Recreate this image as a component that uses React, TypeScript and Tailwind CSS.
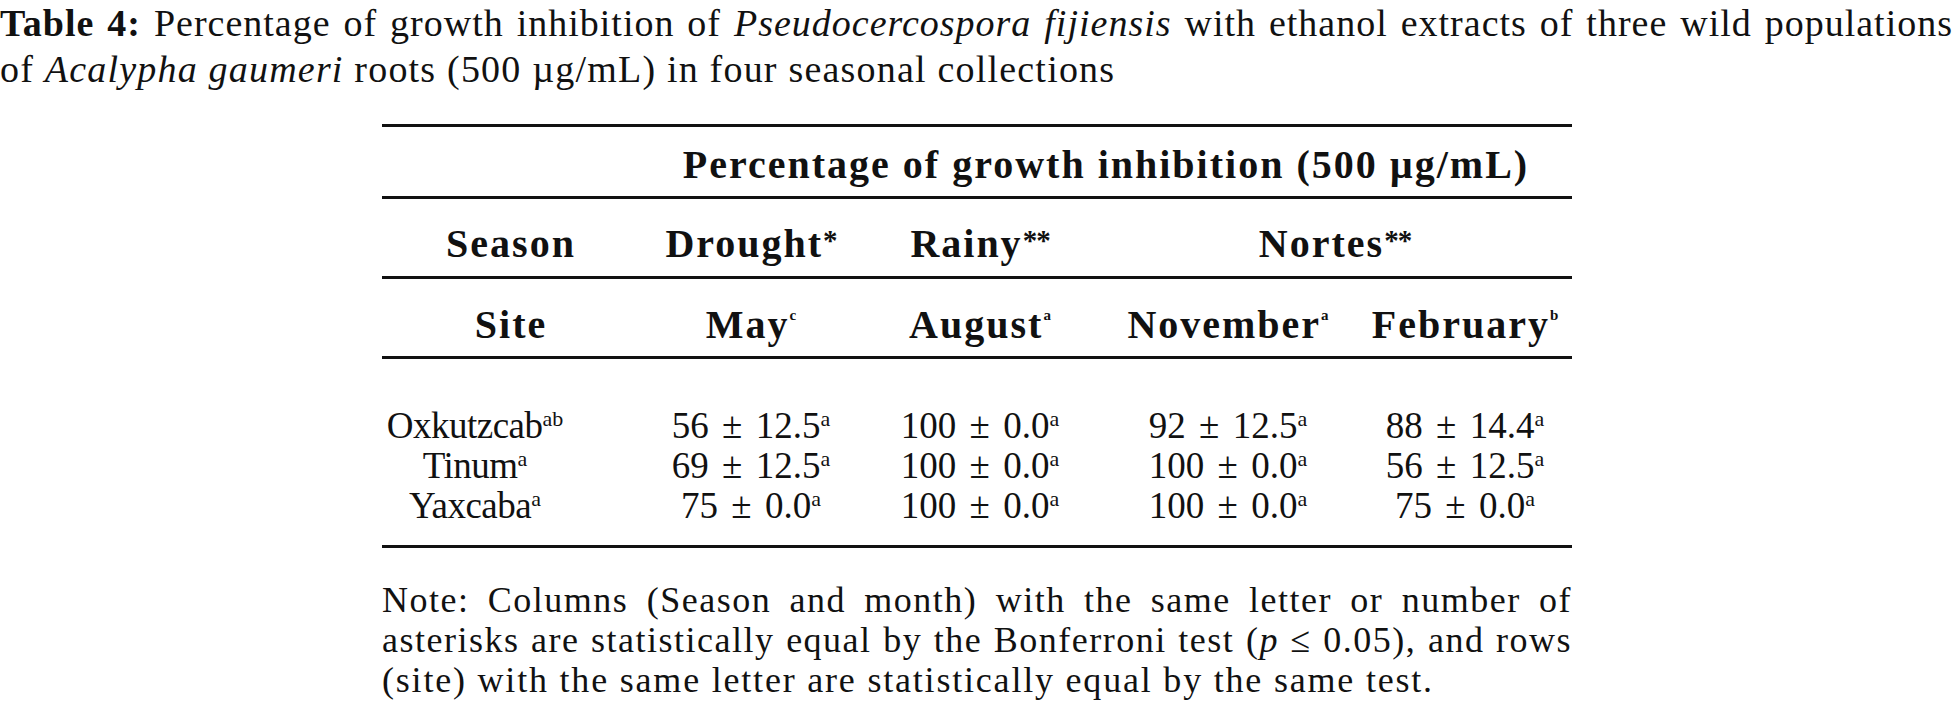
import React from "react";

const COLS = "grid grid-cols-[258px_222px_236px_260px_214px]";

function Star({ n }: { n: number }) {
  return (
    <span className="relative top-[-7px] text-[29px] leading-none tracking-[-1px]">
      {n === 1 ? "*" : "**"}
    </span>
  );
}

function HSup({ c }: { c: string }) {
  return (
    <span className="relative top-[-18px] text-[15px] leading-none tracking-[0px]">{c}</span>
  );
}

function DSup({ c }: { c: string }) {
  return (
    <span className="relative top-[-12px] text-[22px] leading-none tracking-[0px] [word-spacing:0px]">
      {c}
    </span>
  );
}

const rows: { site: string; ss: string; vals: string[] }[] = [
  { site: "Oxkutzcab", ss: "ab", vals: ["56 ± 12.5", "100 ± 0.0", "92 ± 12.5", "88 ± 14.4"] },
  { site: "Tinum", ss: "a", vals: ["69 ± 12.5", "100 ± 0.0", "100 ± 0.0", "56 ± 12.5"] },
  { site: "Yaxcaba", ss: "a", vals: ["75 ± 0.0", "100 ± 0.0", "100 ± 0.0", "75 ± 0.0"] },
];

export default function App() {
  return (
    <div className="w-[1953px] h-[724px] overflow-hidden bg-white text-[#111] font-['Liberation_Serif',serif]">
      {/* Caption */}
      <div className="text-[38px] leading-[46px]">
        <div className="tracking-[1px] text-justify [text-align-last:justify]">
          <b>Table 4:</b> Percentage of growth inhibition of <i>Pseudocercospora fijiensis</i> with ethanol extracts of three wild populations
        </div>
        <div className="tracking-[1.2px]">
          of <i>Acalypha gaumeri</i> roots (500 µg/mL) in four seasonal collections
        </div>
      </div>

      {/* Table */}
      <div className="ml-[382px] w-[1190px] mt-[32px]">
        <div className="font-bold text-[40px] leading-[44px] tracking-[2px]">
          <div className={`${COLS} h-[72px] pt-[7px] items-center border-t-[3px] border-[#111]`}>
            <div className="col-start-2 col-span-4 text-center">Percentage of growth inhibition (500 µg/mL)</div>
          </div>
          <div className={`${COLS} h-[80px] pt-[13px] items-center border-t-[3px] border-[#111]`}>
            <div className="text-center">Season</div>
            <div className="text-center">
              Drought
              <Star n={1} />
            </div>
            <div className="text-center">
              Rainy
              <Star n={2} />
            </div>
            <div className="col-span-2 text-center">
              Nortes
              <Star n={2} />
            </div>
          </div>
          <div className={`${COLS} h-[80px] pt-[15px] items-center border-t-[3px] border-[#111]`}>
            <div className="text-center">Site</div>
            <div className="text-center">
              May
              <HSup c="c" />
            </div>
            <div className="text-center">
              August
              <HSup c="a" />
            </div>
            <div className="text-center">
              November
              <HSup c="a" />
            </div>
            <div className="text-center">
              February
              <HSup c="b" />
            </div>
          </div>
        </div>

        <div className="h-[192px] pt-[47px] border-t-[3px] border-b-[3px] border-[#111] text-[37px] leading-[40px]">
          {rows.map((r) => (
            <div key={r.site} className={`${COLS} h-[40px]`}>
              <div className="text-center pr-[72px] tracking-[-0.5px]">
                {r.site}
                <DSup c={r.ss} />
              </div>
              {r.vals.map((v, i) => (
                <div key={i} className="text-center [word-spacing:4px]">
                  {v}
                  <DSup c="a" />
                </div>
              ))}
            </div>
          ))}
        </div>

        {/* Note */}
        <div className="mt-[32px] text-[36px] leading-[40px]">
          <div className="tracking-[1.5px] text-justify [text-align-last:justify]">
            Note: Columns (Season and month) with the same letter or number of
          </div>
          <div className="tracking-[1.5px] text-justify [text-align-last:justify]">
            asterisks are statistically equal by the Bonferroni test (<i>p</i> ≤ 0.05), and rows
          </div>
          <div className="tracking-[1.8px]">(site) with the same letter are statistically equal by the same test.</div>
        </div>
      </div>
    </div>
  );
}
